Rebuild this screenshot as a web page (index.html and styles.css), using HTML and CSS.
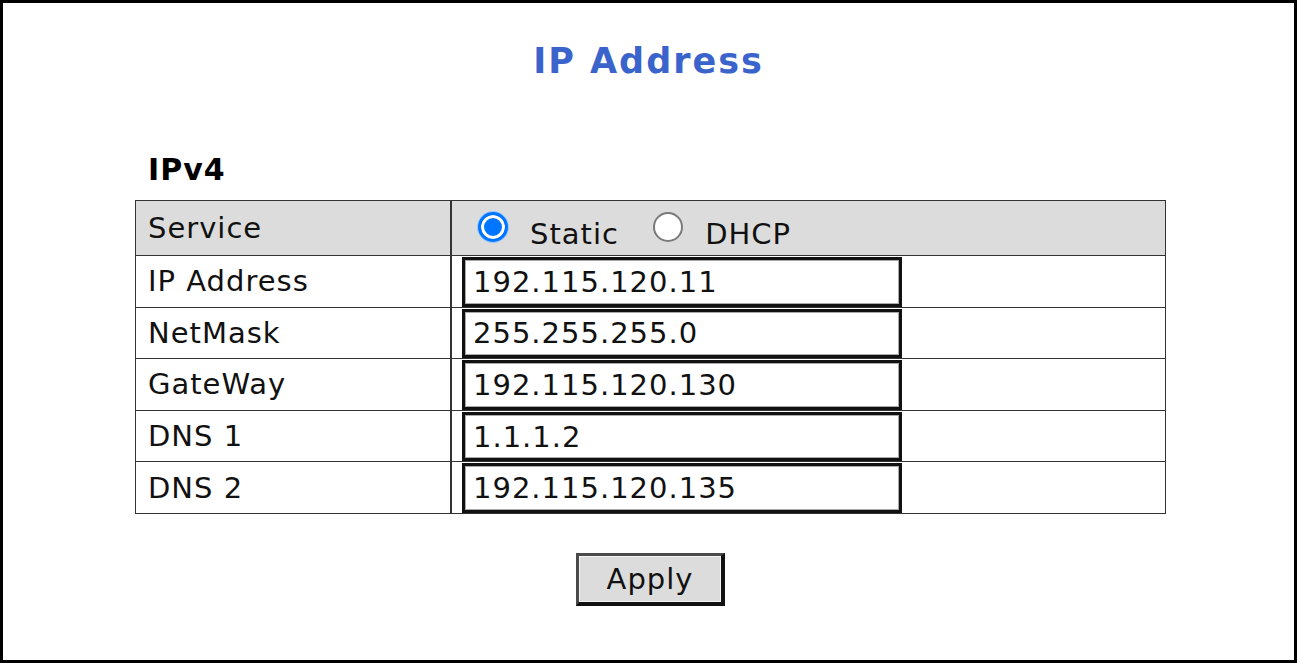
FILE: index.html
```html
<!DOCTYPE html>
<html>
<head>
<meta charset="utf-8">
<title>IP Address</title>
<link rel="stylesheet" href="styles.css">
</head>
<body>
<div class="frame">
  <h1 class="title">IP Address</h1>
  <div class="section">
    <h2 class="subtitle">IPv4</h2>
    <table class="net">
      <tr class="head">
        <td class="label">Service</td>
        <td class="value">
          <label class="opt"><input type="radio" name="svc" class="radio" checked><span>Static</span></label>
          <label class="opt"><input type="radio" name="svc" class="radio"><span>DHCP</span></label>
        </td>
      </tr>
      <tr>
        <td class="label">IP Address</td>
        <td class="value"><input class="field" type="text" value="192.115.120.11"></td>
      </tr>
      <tr>
        <td class="label">NetMask</td>
        <td class="value"><input class="field" type="text" value="255.255.255.0"></td>
      </tr>
      <tr>
        <td class="label">GateWay</td>
        <td class="value"><input class="field" type="text" value="192.115.120.130"></td>
      </tr>
      <tr>
        <td class="label">DNS 1</td>
        <td class="value"><input class="field" type="text" value="1.1.1.2"></td>
      </tr>
      <tr>
        <td class="label">DNS 2</td>
        <td class="value"><input class="field" type="text" value="192.115.120.135"></td>
      </tr>
    </table>
    <div class="actions">
      <button class="apply" type="button">Apply</button>
    </div>
  </div>
</div>
</body>
</html>
```
FILE: styles.css
```css
html, body {
  margin: 0;
  padding: 0;
  background: #fff;
}

body {
  font-family: "DejaVu Sans", Verdana, sans-serif;
  color: #111;
}

.frame {
  box-sizing: border-box;
  width: 1297px;
  height: 663px;
  border: 3px solid #000;
  display: flex;
  flex-direction: column;
}

.title {
  margin: 36px 0 0;
  text-align: center;
  font-size: 35px;
  line-height: 44px;
  letter-spacing: 2px;
  font-weight: bold;
  color: #3a64cc;
}

.section {
  padding: 0 0 0 132px;
  display: flex;
  flex-direction: column;
}

.subtitle {
  margin: 69px 0 0 13px;
  font-size: 30px;
  line-height: 36px;
  letter-spacing: 1px;
  font-weight: bold;
  color: #000;
}

.net {
  margin-top: 12px;
  width: 1031px;
  border-collapse: collapse;
  border: 1px solid #333;
  font-size: 29px;
  letter-spacing: 1px;
}

.net td {
  border: 1px solid #333;
  padding: 0;
  vertical-align: middle;
}

.net td.label {
  width: 302px;
  padding-left: 12px;
  border-right: 2px solid #333;
}

.net tr.head td {
  background: #dcdcdc;
  height: 54px;
}

.net td.value {
  padding: 1px 0 0 10px;
}

.head td.value {
  padding: 0 0 0 26px;
}

.opt {
  display: inline-flex;
  align-items: flex-end;
  margin-right: 24px;
}

.opt span {
  margin-left: 22px;
  line-height: 34px;
  position: relative;
  top: 9px;
}

.radio {
  appearance: none;
  -webkit-appearance: none;
  box-sizing: border-box;
  width: 30px;
  height: 30px;
  margin: 0;
  border-radius: 50%;
  border: 2px solid #7a7a7a;
  background: #fff;
}

.radio:checked {
  border: 3px solid #0075ff;
  background: #0075ff;
  box-shadow: inset 0 0 0 3px #fff, 0 0 0 1px #9cc8ff;
}

.field {
  box-sizing: border-box;
  display: block;
  width: 440px;
  height: 49.6px;
  margin: 0;
  padding: 0 8px;
  border: 3px solid #111;
  box-shadow: inset 0 0 0 1px #aaa;
  font-family: "DejaVu Sans", Verdana, sans-serif;
  font-size: 29px;
  letter-spacing: 1px;
  color: #111;
  background: #fff;
  outline: none;
}

.actions {
  width: 1031px;
  display: flex;
  justify-content: center;
  margin-top: 39px;
}

.apply {
  box-sizing: border-box;
  width: 149px;
  height: 53px;
  padding: 0;
  background: #dcdcdc;
  border-style: solid;
  border-width: 3px 4px 4px 3px;
  border-color: #4a4a4a #111 #111 #4a4a4a;
  box-shadow: inset 0 0 0 1px #f4f4f4;
  font-family: "DejaVu Sans", Verdana, sans-serif;
  font-size: 29px;
  letter-spacing: 1px;
  color: #111;
}
```
